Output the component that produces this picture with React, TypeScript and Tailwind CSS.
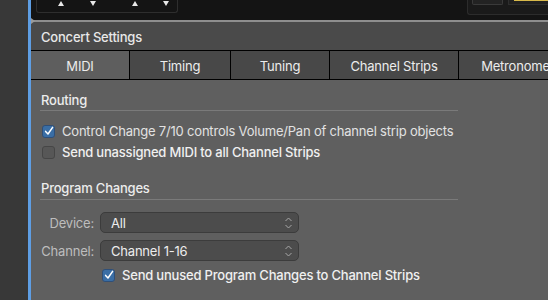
import React from 'react';

const font = { fontFamily: 'Inter, "Liberation Sans", sans-serif' };

const Check = ({ on }: { on: boolean }) =>
  on ? (
    <span className="flex h-[13px] w-[13px] shrink-0 items-center justify-center rounded-[3px] border border-[#2f4f78] bg-[#3a6ea5]">
      <svg width="10" height="10" viewBox="0 0 10 10">
        <path d="M1.6 5.4 L4 8 L8.6 1.4" fill="none" stroke="#fff" strokeWidth="1.5" strokeLinecap="round" strokeLinejoin="round" />
      </svg>
    </span>
  ) : (
    <span className="h-[13px] w-[13px] shrink-0 rounded-[3px] border border-[#464646] bg-[#575757]" />
  );

const Chevrons = () => (
  <svg width="9" height="14" viewBox="0 0 9 14">
    <path d="M1.5 5 L4.5 2 L7.5 5 M1.5 9 L4.5 12 L7.5 9" fill="none" stroke="#a8a8a8" strokeWidth="1" />
  </svg>
);

const Popup = ({ value }: { value: string }) => (
  <div className="flex h-[21px] w-[199px] items-center justify-between rounded-[5px] border border-[#3c3c3c] bg-[#4c4c4c] pl-[10px] pr-[5px] text-[#ececec]">
    <span>{value}</span>
    <Chevrons />
  </div>
);

const Tri = ({ up }: { up: boolean }) => (
  <svg width="6" height="5" viewBox="0 0 6 5">
    <path d={up ? 'M3 0 L6 5 L0 5 Z' : 'M0 0 L6 0 L3 5 Z'} fill="#e8e8e8" />
  </svg>
);

const tabs = [
  { label: 'MIDI', w: 'w-[99px]', active: true },
  { label: 'Timing', w: 'w-[101px]', active: false },
  { label: 'Tuning', w: 'w-[99px]', active: false },
  { label: 'Channel Strips', w: 'w-[129px]', active: false },
  { label: 'Metronome', w: 'w-[114px]', active: false },
];

export default function App() {
  return (
    <div className="flex h-[300px] w-[548px] overflow-hidden bg-[#5f5f5f] text-[13px] leading-[16px] tracking-[-0.2px]" style={font}>
      <div className="w-[28px] shrink-0 bg-[#383838]" />
      <div className="w-[3px] shrink-0 bg-[#5e9ee4]" />
      <div className="relative flex min-w-0 flex-1 flex-col">
        {/* top transport area */}
        <div className="flex h-[20px] shrink-0 items-start justify-between bg-[#141414]">
          <div className="ml-[5px] flex h-[13px] w-[142px] items-start rounded-b-[3px] border border-t-0 border-[#2e2e2e] pt-[1px]">
            <div className="ml-[21px] flex gap-[26px]">
              <Tri up />
              <Tri up={false} />
            </div>
            <div className="ml-[36px] flex gap-[25px]">
              <Tri up />
              <Tri up={false} />
            </div>
          </div>
          <div className="flex h-[15px] w-[81px] items-start gap-[5px] rounded-bl-[3px] border-b border-l border-[#2c2c2c] bg-[#1a1a1a] pl-[4px]">
            <div className="h-[5px] w-[31px] rounded-b-[2px] border border-t-0 border-[#3a3a3a] bg-[#232323]" />
            <div className="h-[5px] flex-1 border-l border-b border-[#2e2e2e] bg-[#202020] pl-[5px]">
              <div className="h-[1px] w-full bg-[#d8b94a]" />
            </div>
          </div>
        </div>
        <div className="h-[2px] shrink-0 bg-[#8e8e8e]" />
        <svg className="absolute left-0 top-[18px]" width="4" height="6" viewBox="0 0 4 6">
          <path d="M0 0 L4 3 L0 6 Z" fill="#9a9a9a" />
        </svg>

        {/* header */}
        <div className="flex h-[28px] shrink-0 items-center bg-[#4a4a4a] pl-[10px] pt-[2px] font-medium text-[#e8e8e8]">
          Concert Settings
        </div>

        {/* tabs */}
        <div className="flex h-[30px] shrink-0 border-y border-black bg-[#484848]">
          {tabs.map((t) => (
            <div
              key={t.label}
              className={`flex ${t.w} shrink-0 items-center justify-center whitespace-nowrap border-r border-black pt-[2px] text-[#ececec] ${t.active ? 'bg-[#5e5e5e]' : 'bg-[#484848]'}`}
            >
              {t.label}
            </div>
          ))}
        </div>

        {/* content */}
        <div className="flex shrink-0 flex-col pl-[9px]">
          <div className="mt-[12px] w-[418px] border-b border-[#7a7a7a] pb-[2px] pl-[1px] font-medium text-[#ececec]">Routing</div>
          <div className="mt-[12px] flex items-center gap-[7px] pl-[2px]">
            <Check on />
            <span className="text-[#e2e2e2]">Control Change 7/10 controls Volume/Pan of channel strip objects</span>
          </div>
          <div className="mt-[5px] flex items-center gap-[7px] pl-[2px]">
            <Check on={false} />
            <span className="font-medium text-[#f0f0f0]">Send unassigned MIDI to all Channel Strips</span>
          </div>
          <div className="mt-[20px] w-[418px] border-b border-[#7a7a7a] pb-[3px] pl-[1px] font-medium text-[#ececec]">Program Changes</div>
          <div className="mt-[12px] grid grid-cols-[54px_auto] items-center gap-x-[6px] gap-y-[7px]">
            <span className="text-right text-[#bdbdbd]">Device:</span>
            <Popup value="All" />
            <span className="text-right text-[#bdbdbd]">Channel:</span>
            <Popup value="Channel 1-16" />
          </div>
          <div className="mt-[6px] flex items-center gap-[7px] pl-[62px]">
            <Check on />
            <span className="font-medium text-[#f0f0f0]">Send unused Program Changes to Channel Strips</span>
          </div>
        </div>
      </div>
    </div>
  );
}
